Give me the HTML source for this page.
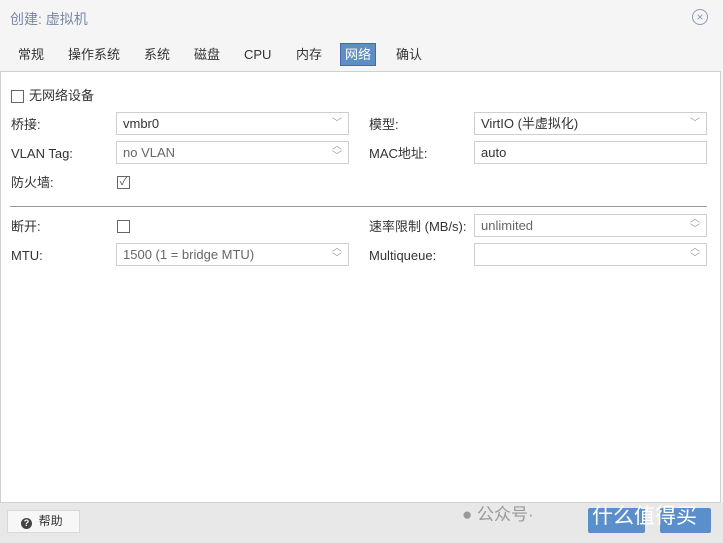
<html><head><style>
body{margin:0;width:723px;height:543px;background:#f5f5f5;font-family:"Liberation Sans","Noto Sans CJK SC",sans-serif;font-size:13px;color:#333;position:relative;overflow:hidden}
.a{position:absolute;line-height:15px;white-space:nowrap}
.f{position:absolute;height:23px;border:1px solid #cfcfcf;background:#fff;box-sizing:border-box;padding:3px 6px;font-size:13px;line-height:15px;white-space:nowrap}
.dis{color:#666}
.cb{position:absolute;width:11px;height:11px;border:1px solid #666;background:#fff}
.ar{position:absolute;right:6px;top:3px;color:#999;font-size:10px}
.t{position:absolute;white-space:nowrap;line-height:15px}
</style></head><body>
<div class="a" style="left:10px;top:12px;font-size:14px;color:#7a87a8">创建: 虚拟机</div>
<div class="a" style="left:692px;top:9px;width:14px;height:14px;border:1px solid #8a9bb5;border-radius:50%;color:#8a9bb5;font-size:12px;line-height:14px;text-align:center">×</div>
<div class="a" style="top:47px;left:18px;font-size:13px;color:#333">
<span class="t" style="left:0">常规</span><span class="t" style="left:50px">操作系统</span><span class="t" style="left:126px">系统</span><span class="t" style="left:176px">磁盘</span><span class="t" style="left:226px">CPU</span><span class="t" style="left:278px">内存</span><span class="t" style="left:322px;top:-4px;background:#5d8fc6;color:#fff;padding:3px 4px;border:1px solid #3e6ea5">网络</span><span class="t" style="left:378px">确认</span></div>
<div class="a" style="left:0;top:71px;width:721px;height:432px;background:#fff;border:1px solid #d0d0d0;box-sizing:border-box"></div>
<div class="cb" style="left:11px;top:90px"></div><div class="a" style="left:29px;top:88px">无网络设备</div>
<div class="a" style="left:11px;top:117px">桥接:</div>
<div class="f" style="left:116px;top:112px;width:233px">vmbr0<span class="ar">﹀</span></div>
<div class="a" style="left:369px;top:117px">模型:</div>
<div class="f" style="left:474px;top:112px;width:233px">VirtIO (半虚拟化)<span class="ar">﹀</span></div>
<div class="a" style="left:11px;top:146px">VLAN Tag:</div>
<div class="f dis" style="left:116px;top:141px;width:233px">no VLAN<span class="ar" style="top:0;line-height:10px">︿<br>﹀</span></div>
<div class="a" style="left:369px;top:146px">MAC地址:</div>
<div class="f" style="left:474px;top:141px;width:233px">auto</div>
<div class="a" style="left:11px;top:175px">防火墙:</div>
<div class="cb" style="left:117px;top:176px;font-size:11px;line-height:11px;text-align:center;color:#555">✓</div>
<div class="a" style="left:10px;top:206px;width:697px;height:1px;background:#999"></div>
<div class="a" style="left:11px;top:219px">断开:</div>
<div class="cb" style="left:117px;top:220px"></div>
<div class="a" style="left:369px;top:219px">速率限制 (MB/s):</div>
<div class="f dis" style="left:474px;top:214px;width:233px">unlimited<span class="ar" style="top:0;line-height:10px">︿<br>﹀</span></div>
<div class="a" style="left:11px;top:248px">MTU:</div>
<div class="f dis" style="left:116px;top:243px;width:233px">1500 (1 = bridge MTU)<span class="ar" style="top:0;line-height:10px">︿<br>﹀</span></div>
<div class="a" style="left:369px;top:248px">Multiqueue:</div>
<div class="f" style="left:474px;top:243px;width:233px"><span class="ar" style="top:0;line-height:10px">︿<br>﹀</span></div>
<div class="a" style="left:0;top:503px;width:723px;height:40px;background:#e8e8e8"></div>
<div class="a" style="left:7px;top:510px;width:73px;height:23px;background:#f7f7f7;border:1px solid #d8d8d8;box-sizing:border-box;font-size:12px;padding:3px 0 0 13px;line-height:15px"><span style="display:inline-block;width:11px;height:11px;border-radius:50%;background:#444;color:#fff;font-size:9px;line-height:11px;text-align:center;font-weight:bold;vertical-align:-1px">?</span>&nbsp; 帮助</div>
<div class="a" style="left:588px;top:508px;width:57px;height:25px;background:#5b8fcb;border-radius:2px"></div>
<div class="a" style="left:660px;top:508px;width:51px;height:25px;background:#5b8fcb;border-radius:2px"></div>
<div class="a" style="left:462px;top:505px;font-size:17px;line-height:20px;color:#999">● 公众号·</div>
<div class="a" style="left:592px;top:504px;font-size:21px;line-height:26px;color:#fff">什么值得买</div>
</body></html>
